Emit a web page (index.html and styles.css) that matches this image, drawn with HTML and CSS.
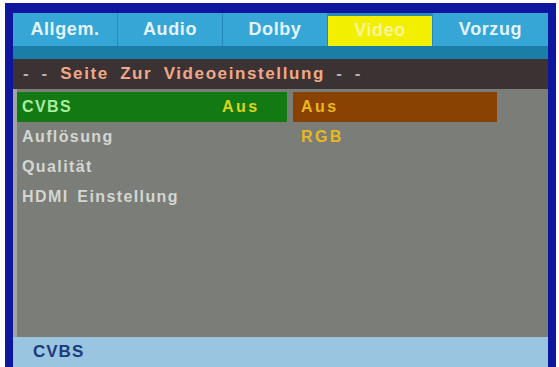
FILE: index.html
```html
<!DOCTYPE html>
<html lang="de">
<head>
    <meta charset="UTF-8">
    <title>Videoeinstellung</title>
    <link rel="stylesheet" href="styles.css">
</head>
<body>
    <div id="screen">
        <ul id="tabs">
            <li>Allgem.</li>
            <li>Audio</li>
            <li>Dolby</li>
            <li class="selected">Video</li>
            <li>Vorzug</li>
        </ul>
        <div class="band"></div>
        <div class="title"><span class="dash">- -</span> Seite Zur Videoeinstellung <span class="dash">- -</span></div>
        <div id="panel">
            <div class="row active">
                <span class="label">CVBS</span>
                <span class="value">Aus</span>
            </div>
            <div class="row">
                <span class="label">Auflösung</span>
            </div>
            <div class="row">
                <span class="label">Qualität</span>
            </div>
            <div class="row">
                <span class="label">HDMI Einstellung</span>
            </div>
            <ul id="options">
                <li class="selected">Aus</li>
                <li>RGB</li>
            </ul>
        </div>
        <div id="status">CVBS</div>
    </div>
</body>
</html>
```

FILE: styles.css
```css
*{
    margin: 0;
    padding: 0;
}
ul{
    list-style: none;
}
body{
    background: #fcfcfc;
    font-family: "Liberation Sans", Arial, sans-serif;
    font-weight: bold;
}
#screen{
    width: 535px;
    height: 354px;
    margin: 3px 0 0 5px;
    border: 8px solid #0d169c;
    border-top-width: 10px;
    border-bottom: none;
    display: flex;
    flex-direction: column;
    background: #7b7d79;
}
#tabs{
    display: grid;
    grid-template-columns: 104px 104px 104px 104px 1fr;
    gap: 1px;
    background: #2789b8;
    height: 33px;
}
#tabs li{
    background: #36a6d6;
    color: #e4f4fb;
    font-size: 18px;
    line-height: 33px;
    text-align: center;
    letter-spacing: 0.6px;
}
#tabs li.selected{
    background: #f2f000;
    color: #f6f49a;
    margin: 3px 0 0;
    line-height: 28px;
}
.band{
    height: 13px;
    background: #1b7ea6;
}
.title{
    height: 30px;
    line-height: 30px;
    background: #3b3333;
    color: #f2a888;
    font-size: 17px;
    letter-spacing: 1.6px;
    word-spacing: 5px;
    padding-left: 10px;
}
.title .dash{
    color: #b8b0b0;
}
#panel{
    flex: 1;
    position: relative;
    padding-top: 3px;
    border-left: 4px solid #a2a4a0;
}
.row{
    width: 270px;
    height: 30px;
    line-height: 30px;
    display: flex;
    color: #d4d6d2;
    font-size: 16px;
    letter-spacing: 1.4px;
    word-spacing: 3px;
    padding-left: 5px;
    box-sizing: border-box;
}
.row .label{
    width: 200px;
}
.row.active{
    background: #137a13;
    color: #a8eca0;
}
.row .value{
    color: #dcd41c;
    letter-spacing: 2.4px;
}
#options{
    position: absolute;
    left: 276px;
    top: 3px;
    width: 204px;
}
#options li{
    height: 30px;
    line-height: 30px;
    padding-left: 8px;
    color: #e8b81c;
    font-size: 16px;
    letter-spacing: 2.4px;
}
#options li.selected{
    background: #8a4203;
}
#status{
    height: 30px;
    line-height: 30px;
    background: #99c5e0;
    color: #1b3a7c;
    font-size: 17px;
    padding-left: 20px;
    letter-spacing: 1px;
}
```
